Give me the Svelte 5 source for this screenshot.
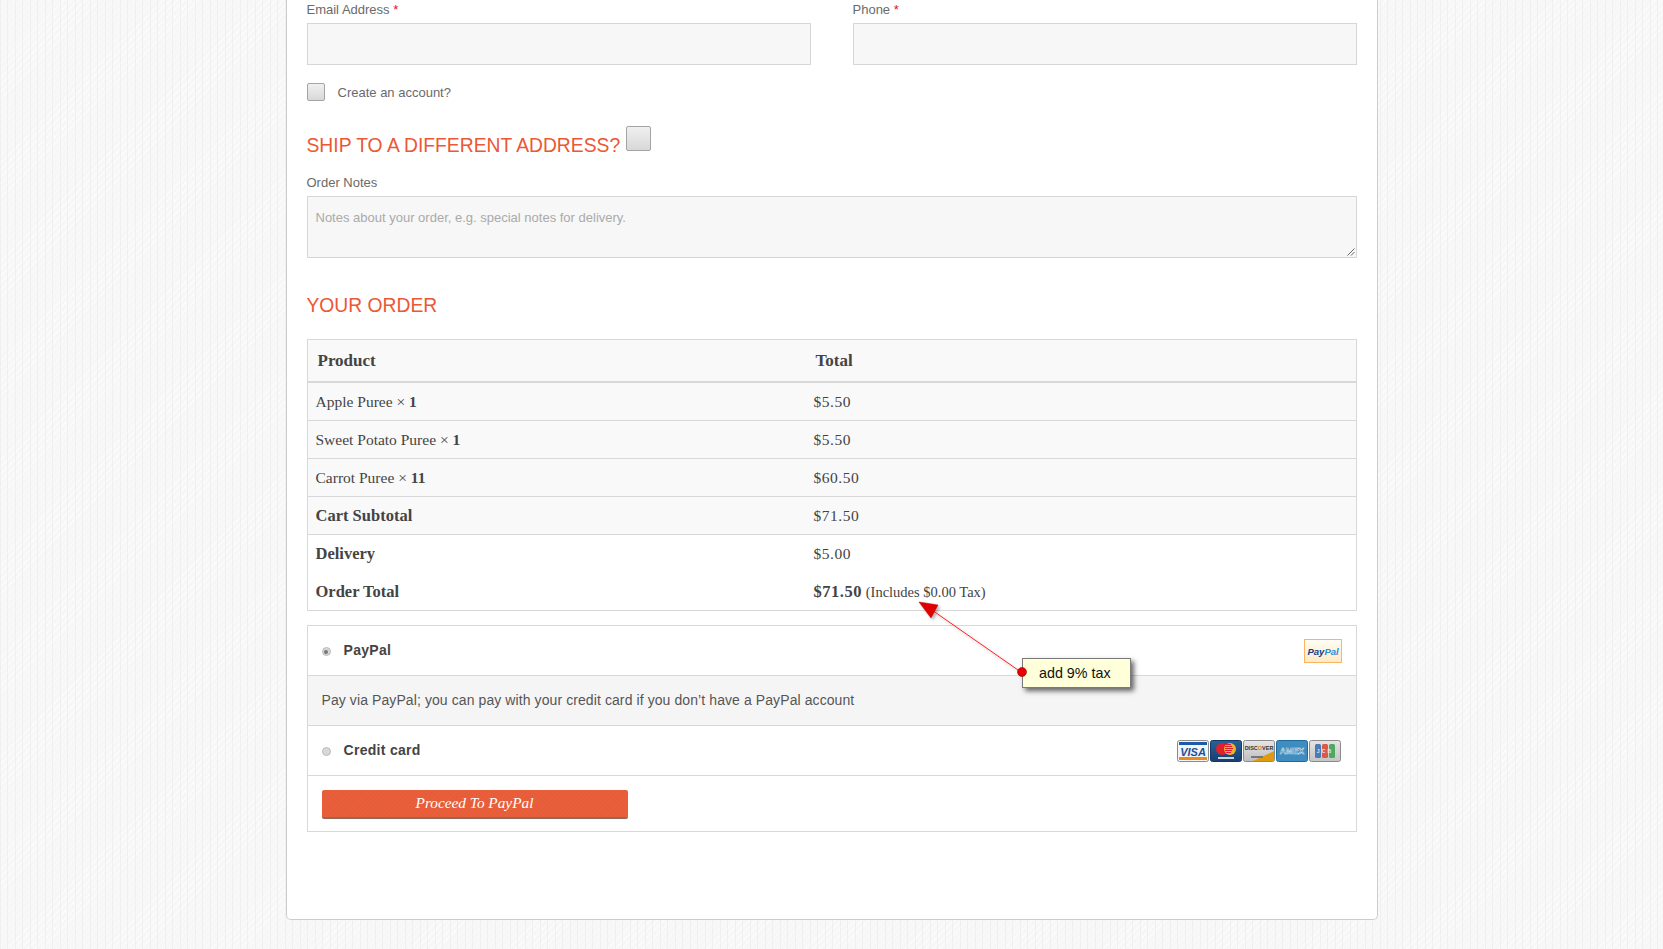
<script>
  const rows = [
    { name: 'Apple Puree', qty: '1', total: '$5.50' },
    { name: 'Sweet Potato Puree', qty: '1', total: '$5.50' },
    { name: 'Carrot Puree', qty: '11', total: '$60.50' }
  ];
</script>

<div class="page">
  <main class="card">
    <div class="two">
      <div>
        <div class="lab">Email Address <span class="req">*</span></div>
        <div class="input"></div>
      </div>
      <div>
        <div class="lab">Phone <span class="req">*</span></div>
        <div class="input"></div>
      </div>
    </div>

    <div class="create">
      <span class="check"></span>
      <span>Create an account?</span>
    </div>

    <div class="ship">
      <h3>Ship to a different address?</h3>
      <span class="check big"></span>
    </div>

    <div class="lab notes-lab">Order Notes</div>
    <div class="textarea">
      Notes about your order, e.g. special notes for delivery.
      <svg class="grip" width="9" height="9" viewBox="0 0 9 9"><path d="M8.5 1.5 1.5 8.5M8.5 5 5 8.5" stroke="#666" fill="none"/></svg>
    </div>

    <h3 class="order-h">Your order</h3>

    <table>
      <thead>
        <tr><th class="c1">Product</th><th>Total</th></tr>
      </thead>
      <tbody>
        {#each rows as r}
          <tr class="line">
            <td class="c1">{r.name} × <b>{r.qty}</b></td>
            <td class="amt">{r.total}</td>
          </tr>
        {/each}
        <tr class="line"><td class="c1"><b class="lg">Cart Subtotal</b></td><td class="amt">$71.50</td></tr>
        <tr class="plain"><td class="c1"><b class="lg">Delivery</b></td><td class="amt">$5.00</td></tr>
        <tr class="plain last"><td class="c1"><b class="lg">Order Total</b></td><td><b class="lg amt">$71.50</b> <small>(Includes $0.00 Tax)</small></td></tr>
      </tbody>
    </table>

    <section class="pay">
      <div class="method">
        <span class="radio on"></span>
        <span class="mname">PayPal</span>
        <svg class="pp" width="38" height="24" viewBox="0 0 38 24">
          <defs><linearGradient id="ppg" x1="0" y1="0" x2="0" y2="1"><stop offset="0" stop-color="#fffdf5"/><stop offset="1" stop-color="#fde9c6"/></linearGradient></defs>
          <rect x=".5" y=".5" width="37" height="23" fill="url(#ppg)" stroke="#fbb45f"/>
          <text x="3.500" y="15.500" font-family="Liberation Sans, sans-serif" font-size="9.500" font-weight="700" font-style="italic"><tspan fill="#123c8c">Pay</tspan><tspan fill="#2a8fd0">Pal</tspan></text>
        </svg>
      </div>
      <div class="desc">Pay via PayPal; you can pay with your credit card if you don’t have a PayPal account</div>
      <div class="method">
        <span class="radio"></span>
        <span class="mname">Credit card</span>
        <div class="cards">
          <svg width="32" height="22" viewBox="0 0 32 22">
            <rect x=".5" y=".5" width="31" height="21" rx="2" fill="#f3f4f6" stroke="#8b8b8b"/>
            <rect x="2" y="2" width="28" height="3" fill="#1c5aa8"/>
            <rect x="2" y="17" width="28" height="3" fill="#ee8a1c"/>
            <text x="16" y="15.500" text-anchor="middle" font-family="Liberation Sans, sans-serif" font-size="11" font-weight="700" font-style="italic" fill="#1c4f96">VISA</text>
          </svg>
          <svg width="32" height="22" viewBox="0 0 32 22">
            <defs><linearGradient id="mcg" x1="0" y1="0" x2="0" y2="1"><stop offset="0" stop-color="#2a6199"/><stop offset="1" stop-color="#153f6e"/></linearGradient></defs>
            <rect x=".5" y=".5" width="31" height="21" rx="2" fill="url(#mcg)" stroke="#123a66"/>
            <circle cx="12" cy="9" r="6" fill="#e0202a"/>
            <circle cx="20" cy="9" r="6" fill="#f3b02e"/>
            <path d="M16 4.500h5M15 6.500h7M15 8.500h8M15 10.500h7M16 12.500h5" stroke="#e0202a" stroke-width="1"/>
            <rect x="8" y="17" width="16" height="2" fill="#c8d4e2"/>
          </svg>
          <svg width="32" height="22" viewBox="0 0 32 22">
            <defs><linearGradient id="dcg" x1="0" y1="0" x2="0" y2="1"><stop offset="0" stop-color="#e6e6e6"/><stop offset="1" stop-color="#bdbdbd"/></linearGradient></defs>
            <rect x=".5" y=".5" width="31" height="21" rx="2" fill="url(#dcg)" stroke="#8b8b8b"/>
            <path d="M10 21 31 11v10z" fill="#e09a10"/>
            <text x="16" y="9.500" text-anchor="middle" font-family="Liberation Sans, sans-serif" font-size="5.500" font-weight="700" fill="#333">DISC<tspan fill="#e0860f">O</tspan>VER</text>
            <rect x="8" y="16" width="12" height="2" fill="#777"/>
          </svg>
          <svg width="32" height="22" viewBox="0 0 32 22">
            <rect x=".5" y=".5" width="31" height="21" rx="2" fill="#3f8cc0" stroke="#1f6a9c"/>
            <text x="16" y="14" text-anchor="middle" font-family="Liberation Sans, sans-serif" font-size="8.500" font-weight="700" fill="#2a6fa5" stroke="#d6eaf6" stroke-width=".5">AMEX</text>
          </svg>
          <svg width="32" height="22" viewBox="0 0 32 22">
            <defs><linearGradient id="jcg" x1="0" y1="0" x2="0" y2="1"><stop offset="0" stop-color="#e4e4e4"/><stop offset="1" stop-color="#c4c4c4"/></linearGradient></defs>
            <rect x=".5" y=".5" width="31" height="21" rx="2" fill="url(#jcg)" stroke="#8b8b8b"/>
            <rect x="6" y="4" width="6" height="14" rx="1.500" fill="#4a7ab8"/>
            <rect x="13" y="4" width="6" height="14" rx="1.500" fill="#d9584a"/>
            <rect x="20" y="4" width="6" height="14" rx="1.500" fill="#4fa860"/>
            <text x="16" y="13" text-anchor="middle" font-family="Liberation Sans, sans-serif" font-size="5" font-weight="700" fill="#e8e8e8" letter-spacing="2.200">JCB</text>
          </svg>
        </div>
      </div>
      <div class="actions">
        <button>Proceed To PayPal</button>
      </div>
    </section>
  </main>

  <div class="tip">add 9% tax</div>
  <svg class="arrow" width="125" height="85" viewBox="0 0 125 85">
    <defs><filter id="sh" x="-20%" y="-20%" width="150%" height="150%"><feDropShadow dx="2" dy="2" stdDeviation="1.500" flood-color="#000" flood-opacity=".3"/></filter></defs>
    <g filter="url(#sh)">
      <path d="M14 8 103 70" stroke="#f22" stroke-width="1" fill="none"/>
      <path d="M4 2 23 5 16 18Z" fill="#e00000" stroke="#b00000" stroke-width=".5"/>
    </g>
    <circle cx="107" cy="72" r="4.500" fill="#e80000" stroke="#a00000" stroke-width=".6"/>
  </svg>
</div>

<style>
  :global(body) {
    margin: 0;
    background-color: #f7f7f7;
    background-image:
      repeating-linear-gradient(90deg, #f0f0f0 0 1px, transparent 1px 7.500px),
      repeating-linear-gradient(135deg, #fbfbfb 0 1px, transparent 1px 5px);
  }
  .page {
    position: relative;
    height: 949px;
    overflow: hidden;
    font-family: "Liberation Sans", Arial, sans-serif;
    color: #555;
  }
  .card {
    box-sizing: border-box;
    width: 1092px;
    height: 920px;
    margin: 0 auto;
    padding: 0 20px;
    background: #fff;
    border: 1px solid #ccc;
    border-top: 0;
    border-radius: 0 0 5px 5px;
  }
  .two {
    display: grid;
    grid-template-columns: 504px 504px;
    column-gap: 42px;
  }
  .lab {
    padding-top: 1px;
    font-size: 13px;
    line-height: 18px;
    color: #6a6a6a;
  }
  .req { color: #e0102a; }
  .input {
    box-sizing: border-box;
    height: 42px;
    margin-top: 4px;
    background: #f7f7f7;
    border: 1px solid #d6d6d6;
  }
  .create {
    display: flex;
    align-items: center;
    gap: 13px;
    margin-top: 18px;
    font-size: 13px;
    color: #6a6a6a;
  }
  .check {
    box-sizing: border-box;
    display: block;
    width: 18px;
    height: 18px;
    flex: none;
    border: 1px solid #a4a4a4;
    border-radius: 2px;
    background: linear-gradient(#f0f0f0, #d8d8d8);
  }
  .check.big {
    width: 25px;
    height: 25px;
    margin-top: -16px;
  }
  .ship {
    display: flex;
    align-items: center;
    gap: 6px;
    margin-top: 30px;
  }
  h3 {
    margin: 0;
    font-size: 19.300px;
    line-height: 30px;
    font-weight: 400;
    text-transform: uppercase;
    color: #ec5735;
  }
  .notes-lab { margin-top: 12px; }
  .textarea {
    box-sizing: border-box;
    position: relative;
    height: 62px;
    margin-top: 4px;
    padding: 13px 8px;
    background: #f7f7f7;
    border: 1px solid #d6d6d6;
    font-size: 13px;
    line-height: 16px;
    color: #aaa;
  }
  .grip { position: absolute; right: 1px; bottom: 1px; }
  .order-h { margin-top: 33px; }
  table {
    width: 1050px;
    margin-top: 18px;
    border-collapse: separate;
    border-spacing: 0;
    border: 1px solid #d8d8d8;
    font-family: "Liberation Serif", serif;
    font-size: 15.500px;
    color: #444;
    table-layout: fixed;
  }
  .c1 { width: 488px; }
  th {
    height: 41px;
    padding: 0 0 0 10px;
    text-align: left;
    background: #f9f9f9;
    border-bottom: 2px solid #d8d8d8;
    font-size: 17px;
  }
  td {
    box-sizing: border-box;
    padding: 0 0 0 8px;
  }
  .amt { letter-spacing: .5px; }
  .line td {
    height: 38px;
    background: #f9f9f9;
    border-bottom: 1px solid #d8d8d8;
  }
  .plain td { height: 38px; background: #fff; }
  .plain.last td { height: 37px; }
  .lg { font-size: 16.500px; }
  small { font-size: 14.500px; }
  .pay {
    box-sizing: border-box;
    margin-top: 14px;
    width: 1050px;
    border: 1px solid #d8d8d8;
  }
  .method {
    display: flex;
    align-items: center;
    box-sizing: border-box;
    height: 50px;
    padding: 0 14px;
    border-bottom: 1px solid #d8d8d8;
  }
  .radio {
    box-sizing: border-box;
    position: relative;
    width: 9px;
    height: 9px;
    margin-top: 2px;
    border-radius: 50%;
    border: 1px solid #bbb;
    background: #d8d8d8;
    flex: none;
  }
  .radio.on::after {
    content: "";
    position: absolute;
    inset: 1.500px;
    border-radius: 50%;
    background: #777;
  }
  .mname {
    margin-left: 13px;
    font-size: 14px;
    font-weight: 700;
    letter-spacing: .3px;
    color: #444;
    margin-top: -2px;
  }
  .pp { margin-left: auto; margin-top: 1px; }
  .cards {
    display: flex;
    gap: 1px;
    margin-left: auto;
    margin-right: 1px;
  }
  .desc {
    box-sizing: border-box;
    height: 50px;
    padding: 0 14px 1px;
    display: flex;
    align-items: center;
    background: #f5f5f5;
    border-bottom: 1px solid #d8d8d8;
    font-size: 14px;
    letter-spacing: .09px;
    color: #555;
  }
  .actions { padding: 14px 14px 12px; }
  button {
    display: block;
    box-sizing: border-box;
    width: 306px;
    height: 29px;
    padding: 0 0 2px;
    border: 0;
    border-bottom: 2px solid #8f6a58;
    border-radius: 2px;
    background: repeating-linear-gradient(135deg, #e9603c 0 1px, #e75d3a 1px 3px);
    color: #fff;
    font-family: "Liberation Serif", serif;
    font-style: italic;
    font-size: 15.300px;
  }
  .arrow {
    position: absolute;
    left: 915px;
    top: 600px;
  }
  .tip {
    box-sizing: border-box;
    position: absolute;
    left: 1022px;
    top: 658px;
    width: 109px;
    height: 30px;
    padding-left: 16px;
    background: #ffffd9;
    border: 1px solid #7a7a7a;
    box-shadow: 3px 3px 5px rgba(0,0,0,.6);
    color: #111;
    font-size: 14.300px;
    line-height: 28px;
  }
</style>
